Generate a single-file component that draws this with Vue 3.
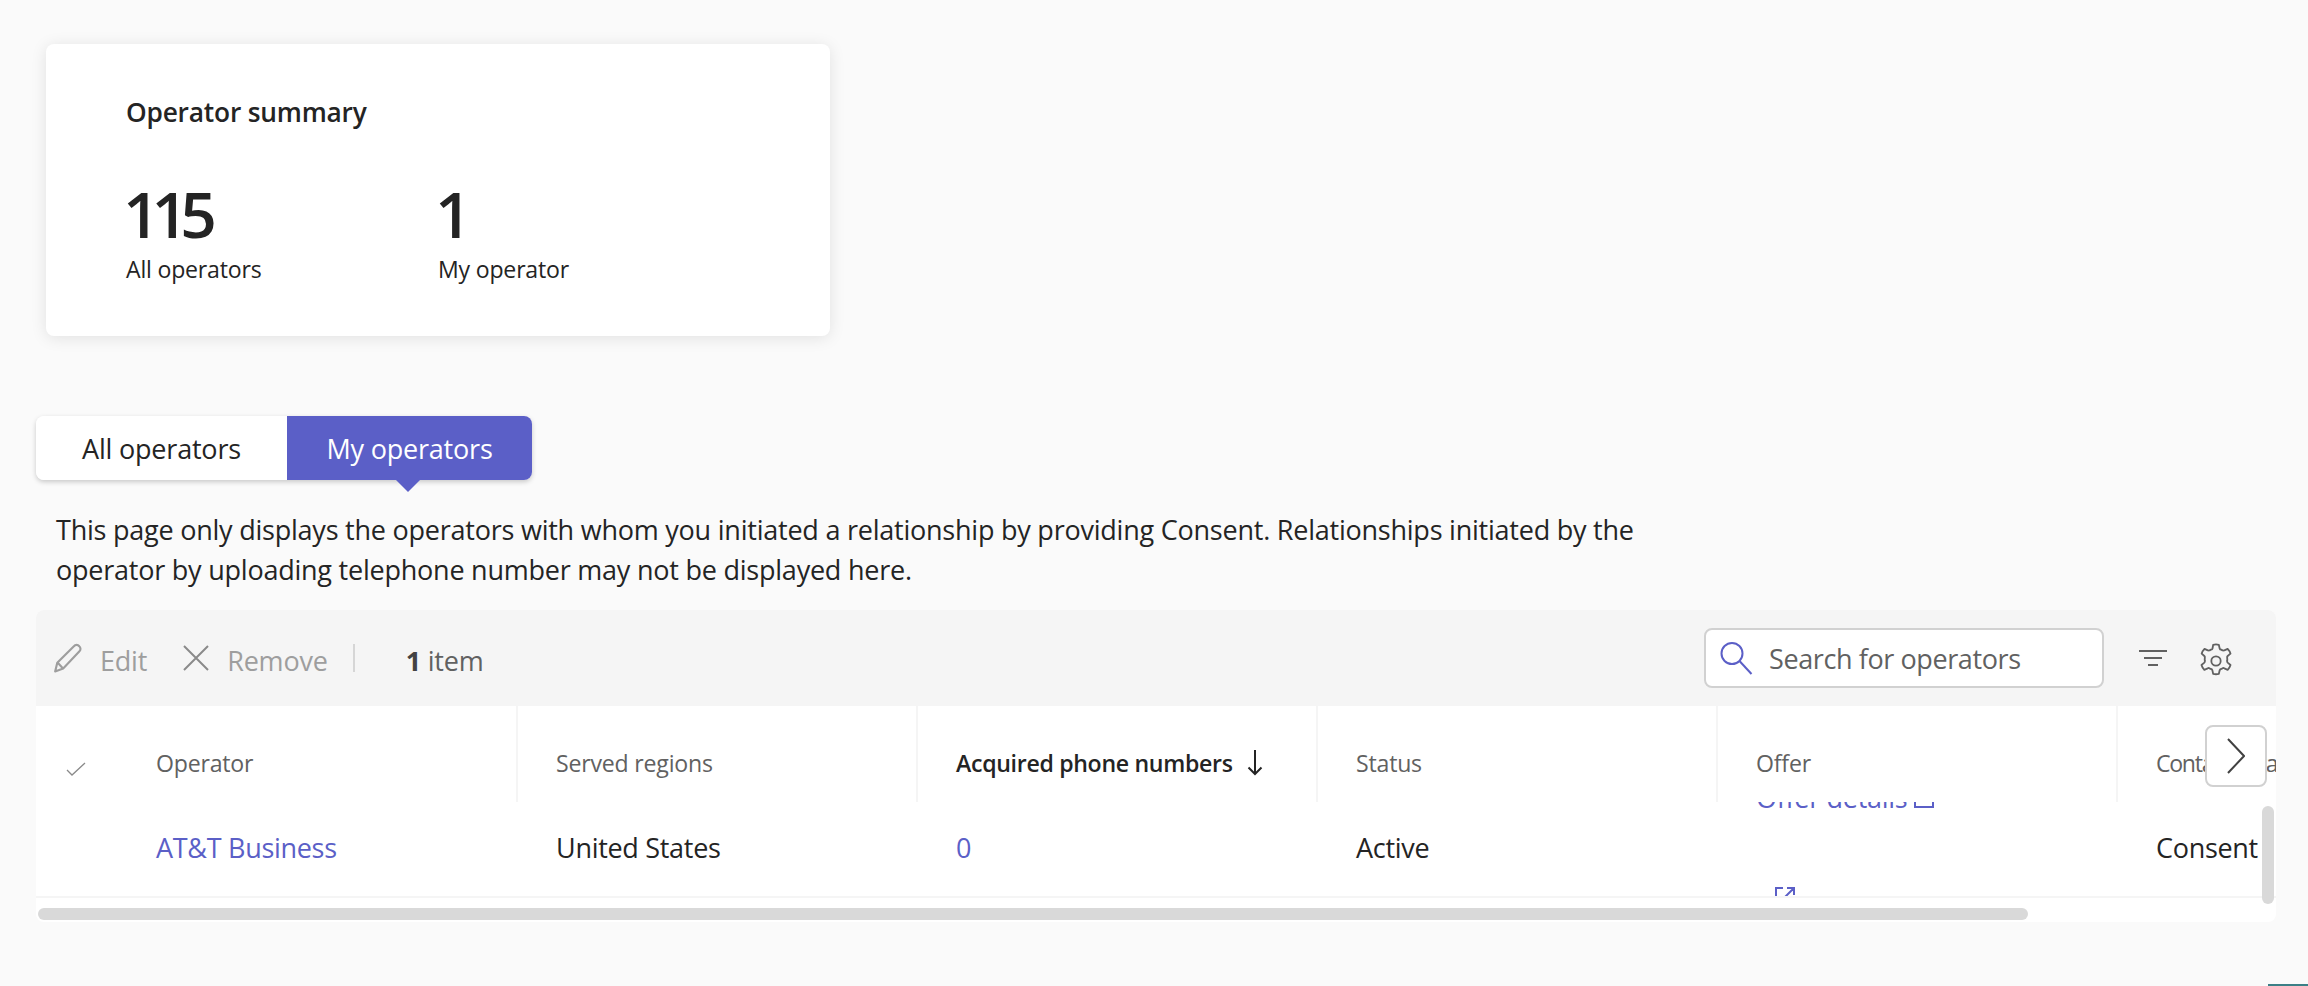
<script setup>
const columns = [
  { key: 'op', label: 'Operator' },
  { key: 'reg', label: 'Served regions' },
  { key: 'num', label: 'Acquired phone numbers', sorted: true },
  { key: 'st', label: 'Status' },
  { key: 'of', label: 'Offer' },
  { key: 'con', label: 'Contact data', tight: true },
]
</script>

<template>
  <div class="page">
    <section class="card">
      <h2 class="card-title">Operator summary</h2>
      <div class="stats">
        <div class="stat">
          <div class="stat-num">115</div>
          <div class="stat-label">All operators</div>
        </div>
        <div class="stat">
          <div class="stat-num">1</div>
          <div class="stat-label">My operator</div>
        </div>
      </div>
    </section>

    <div class="tabs">
      <button class="tab">All operators</button>
      <button class="tab active">My operators</button>
    </div>

    <p class="note">This page only displays the operators with whom you initiated a relationship by providing Consent. Relationships initiated by the<br>operator by uploading telephone number may not be displayed here.</p>

    <section class="table">
      <div class="toolbar">
        <svg class="ic-edit" viewBox="0 0 28 28" width="30" height="30" fill="none" stroke="#9e9e9e" stroke-width="2" stroke-linejoin="round">
          <path d="M2 26.500l2-8L19.500 3a3.200 3.200 0 0 1 5 0 3.300 3.300 0 0 1 .2 4.800L9.500 23.800z"/>
          <path d="M4.200 18.300l5.200 5.400"/>
        </svg>
        <span class="tool-text t-edit">Edit</span>
        <svg class="ic-x" viewBox="0 0 26 26" width="26" height="26" fill="none" stroke="#8a8a8a" stroke-width="2">
          <path d="M1 1l24 24M25 1L1 25"/>
        </svg>
        <span class="tool-text t-remove">Remove</span>
        <span class="sep"></span>
        <span class="count"><b>1</b> item</span>
        <div class="search">
          <svg viewBox="0 0 34 34" width="34" height="34" fill="none" stroke="#5b5fc7" stroke-width="2">
            <circle cx="13" cy="12.500" r="10.500"/>
            <path d="M20.500 20l12 13"/>
          </svg>
          <span class="search-text">Search for operators</span>
        </div>
        <svg class="ic-filter" viewBox="0 0 28 16" width="28" height="16" fill="none" stroke="#616161" stroke-width="2">
          <path d="M0 1h28M5 8h18M9 15h10"/>
        </svg>
        <svg class="ic-gear" viewBox="0 0 24 24" width="40" height="40" fill="none" stroke="#616161" stroke-width="1.100" stroke-linejoin="round">
          <circle cx="12" cy="12" r="2.800"/>
          <path d="M10.300 2.300c1.100-.3 2.300-.3 3.400 0l.5 2.200c.1.400.5.700.9.700l.8.400c.3.200.8.200 1.100 0l2-.9c.8.800 1.400 1.800 1.700 2.900l-1.700 1.400c-.3.300-.4.700-.3 1.100.1.600.1 1.200 0 1.800-.1.400 0 .8.300 1.100l1.700 1.400c-.3 1.100-.9 2.100-1.700 2.900l-2-.9c-.3-.2-.8-.2-1.100 0l-.8.400c-.4.100-.8.300-.9.700l-.5 2.200c-1.100.3-2.300.3-3.400 0l-.5-2.200c-.1-.4-.5-.7-.9-.7l-.8-.4c-.3-.2-.8-.2-1.100 0l-2 .9c-.8-.8-1.400-1.800-1.700-2.900l1.700-1.400c.3-.3.4-.7.300-1.100-.1-.6-.1-1.200 0-1.800.1-.4 0-.8-.3-1.100L3.400 7.600c.3-1.100.9-2.100 1.700-2.900l2 .9c.3.200.8.200 1.100 0l.8-.4c.4-.1.800-.3.900-.7z"/>
        </svg>
      </div>

      <div class="thead">
        <div class="check-col">
          <svg viewBox="0 0 20 14" width="20" height="14" fill="none" stroke="#8a8a8a" stroke-width="1.300"><path d="M1 8l5 5L19 1"/></svg>
        </div>
        <div v-for="c in columns" :key="c.key" class="th" :class="{ sorted: c.sorted, tight: c.tight }">
          <span>{{ c.label }}</span>
          <svg v-if="c.sorted" class="sort" viewBox="0 0 16 26" width="16" height="26" fill="none" stroke="#242424" stroke-width="2"><path d="M8 0v24M1.500 17.500L8 24l6.500-6.500"/></svg>
        </div>
      </div>

      <div class="row">
        <div class="check-col"></div>
        <div class="td"><a class="link">AT&amp;T Business</a></div>
        <div class="td">United States</div>
        <div class="td"><a class="link">0</a></div>
        <div class="td">Active</div>
        <div class="td offer">
          <div class="offer-line">
            <a class="link">Offer details</a>
            <svg class="ext" viewBox="0 0 20 20" width="20" height="20" fill="none" stroke="#5b5fc7" stroke-width="2"><path d="M8 1H1v18h18v-7M12 1h7v7M19 1L9 11"/></svg>
          </div>
          <svg class="ext ext2" viewBox="0 0 20 20" width="20" height="20" fill="none" stroke="#5b5fc7" stroke-width="2"><path d="M8 1H1v18h18v-7M12 1h7v7M19 1L9 11"/></svg>
        </div>
        <div class="td">Consent</div>
      </div>

      <div class="hbar"><div class="hthumb"></div></div>
      <div class="vthumb"></div>
      <button class="next">
        <svg viewBox="0 0 18 36" width="18" height="36" fill="none" stroke="#424242" stroke-width="2"><path d="M1 1l16 17L1 35"/></svg>
      </button>
    </section>
    <div class="corner"></div>
  </div>
</template>

<style scoped>
.page {
  position: relative;
  height: 986px;
  box-sizing: border-box;
  padding: 44px 32px 0 36px;
  background: #fafafa;
  color: #242424;
  font-family: "Open Sans", "Noto Sans", sans-serif;
  overflow: hidden;
}
.card {
  width: 784px;
  height: 292px;
  margin-left: 10px;
  box-sizing: border-box;
  padding: 48px 80px 0;
  background: #fff;
  border-radius: 8px;
  box-shadow: 0 2px 16px rgba(0, 0, 0, 0.1);
}
.card-title {
  margin: 0;
  font-size: 26.300px;
  line-height: 40px;
  font-weight: 600;
  letter-spacing: -0.2px;
}
.stats {
  display: flex;
  margin-top: 50px;
}
.stat { width: 312px; }
.stat-num {
  margin-left: -3px;
  font-size: 64px;
  line-height: 64px;
  font-weight: 600;
  letter-spacing: -8px;
}
.stat-label {
  margin-top: 7px;
  font-size: 23.100px;
  line-height: 32px;
  letter-spacing: -0.2px;
}
.tabs {
  display: flex;
  width: 496px;
  height: 64px;
  margin-top: 80px;
  position: relative;
  border-radius: 8px;
  box-shadow: 0 2px 5px rgba(0, 0, 0, 0.2);
}
.tab {
  width: 251px;
  padding: 0;
  border: 0;
  background: #fff;
  color: #242424;
  font: inherit;
  font-size: 27px;
  letter-spacing: -0.2px;
  border-radius: 8px 0 0 8px;
}
.tab.active {
  position: relative;
  width: 245px;
  background: #5b5fc7;
  color: #fff;
  border-radius: 0 8px 8px 0;
}
.tab.active::after {
  content: "";
  position: absolute;
  left: 109px;
  top: 64px;
  border: 12px solid transparent;
  border-bottom: 0;
  border-top-color: #5b5fc7;
}
.note {
  margin: 30px 0 0 20px;
  font-size: 27px;
  line-height: 40px;
  letter-spacing: -0.23px;
  white-space: nowrap;
}
.table {
  position: relative;
  width: 2240px;
  height: 312px;
  margin-top: 20px;
  background: #fff;
  border-radius: 8px;
  overflow: hidden;
}
.toolbar {
  display: flex;
  align-items: center;
  height: 96px;
  padding-left: 17px;
  box-sizing: border-box;
  background: #f5f5f5;
}
.tool-text {
  padding-top: 5px;
  font-size: 27px;
  color: #9e9e9e;
  letter-spacing: -0.2px;
}
.t-edit { margin-left: 17px; }
.ic-x { margin-left: 36px; }
.t-remove { margin-left: 18px; }
.sep {
  width: 2px;
  height: 28px;
  margin-left: 25px;
  background: #d6d6d6;
}
.count {
  padding-top: 5px;
  margin-left: 51px;
  font-size: 27px;
  color: #616161;
  letter-spacing: -0.2px;
}
.count b { font-weight: 700; color: #424242; }
.search {
  display: flex;
  align-items: center;
  width: 400px;
  height: 60px;
  margin-left: auto;
  margin-right: 35px;
  padding-left: 13px;
  box-sizing: border-box;
  background: #fff;
  border: 2px solid #d1d1d1;
  border-radius: 8px;
}
.search-text {
  margin-left: 16px;
  font-size: 27px;
  color: #616161;
  letter-spacing: -0.4px;
}
.ic-filter { flex: none; }
.ic-gear { flex: none; margin: 5px 40px 0 29px; }
.thead, .row {
  display: flex;
  width: 2521px;
}
.thead {
  height: 96px;
  position: relative;
  z-index: 1;
  background: #fff;
}
.check-col {
  flex: none;
  width: 82px;
  display: flex;
  align-items: center;
  padding-left: 30px;
  box-sizing: border-box;
  padding-top: 30px;
}
.th {
  flex: none;
  width: 400px;
  height: 96px;
  display: flex;
  align-items: center;
  padding-left: 38px;
  padding-top: 18px;
  box-sizing: border-box;
  font-size: 23.100px;
  color: #616161;
  letter-spacing: -0.2px;
  border-right: 2px solid #f5f5f5;
}
.th.sorted {
  color: #242424;
  font-weight: 600;
  letter-spacing: -0.3px;
}
.th.tight { letter-spacing: -1.300px; }
.sort { margin-left: 14px; }
.row {
  height: 96px;
  box-sizing: border-box;
  border-bottom: 2px solid #f5f5f5;
  overflow: hidden;
}
.td {
  flex: none;
  width: 400px;
  height: 91px;
  display: flex;
  flex-direction: column;
  justify-content: center;
  padding-left: 38px;
  box-sizing: border-box;
  font-size: 27px;
  letter-spacing: -0.3px;
}
.link { color: #5b5fc7; }
.offer {
  height: 94px;
}
.offer-line {
  display: flex;
  align-items: baseline;
  height: 36px;
  line-height: 36px;
  flex: none;
  white-space: nowrap;
}
.ext { flex: none; display: block; }
.offer-line .ext { margin-left: 7px; }
.ext2 { margin-left: 19px; margin-top: 71px; margin-bottom: 12px; }
.hbar {
  padding: 10px 0 0 2px;
}
.hthumb {
  width: 1990px;
  height: 12px;
  border-radius: 6px;
  background: #d9d9d9;
}
.vthumb {
  position: absolute;
  left: 2226px;
  top: 196px;
  width: 12px;
  height: 98px;
  border-radius: 6px;
  background: #d9d9d9;
}
.next {
  position: absolute;
  left: 2169px;
  top: 115px;
  z-index: 2;
  width: 62px;
  height: 62px;
  padding: 0;
  display: flex;
  align-items: center;
  justify-content: center;
  background: #fff;
  border: 2px solid #d1d1d1;
  border-radius: 8px;
}
.corner {
  position: absolute;
  right: 0;
  bottom: 0;
  width: 40px;
  height: 2px;
  background: #3b7f86;
}
</style>
